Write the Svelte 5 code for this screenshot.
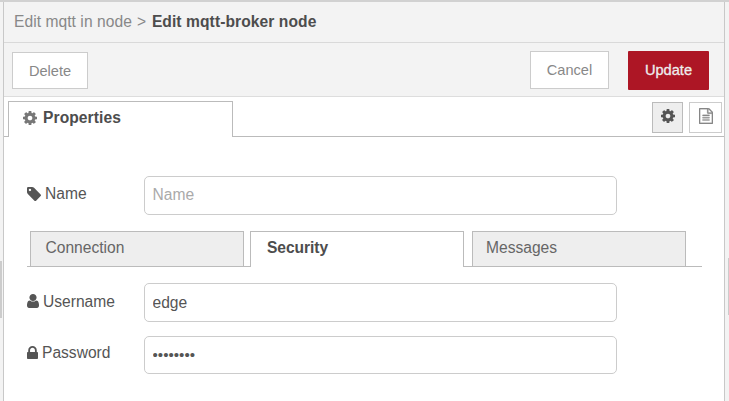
<script>
  const cog = 'M1152 896q0-106-75-181t-181-75-181 75-75 181 75 181 181 75 181-75 75-181zm512-109v222q0 12-8 23t-20 13l-185 28q-19 54-39 91 35 50 107 138 10 12 10 25t-9 23q-27 37-99 108t-94 71q-12 0-26-9l-138-108q-44 23-91 38-16 136-29 186-7 28-36 28h-222q-14 0-24.5-8.5t-11.5-21.5l-28-184q-49-16-90-37l-141 107q-10 9-25 9-14 0-25-11-126-114-165-168-7-10-7-23 0-12 8-23 15-21 51-66.5t54-70.5q-27-50-41-99l-183-27q-13-2-21-12.5t-8-23.5v-222q0-12 8-23t19-13l186-28q14-46 39-92-40-57-107-138-10-12-10-24 0-10 9-23 26-36 98.5-107.5t94.5-71.5q13 0 26 10l138 107q44-23 91-38 16-136 29-186 7-28 36-28h222q14 0 24.5 8.5t11.5 21.5l28 184q49 16 90 37l142-107q9-9 24-9 13 0 25 10 129 119 165 170 7 8 7 22 0 12-8 23-15 21-51 66.5t-54 70.5q26 50 41 98l183 28q13 2 21 12.5t8 23.5z';
  const tag = 'M576 448q0-53-37.5-90.5t-90.5-37.5-90.5 37.5-37.5 90.5 37.5 90.5 90.5 37.5 90.5-37.5 37.5-90.5zm1067 576q0 53-37 90l-491 492q-39 37-91 37-53 0-90-37l-715-716q-38-37-64.5-101t-26.5-117v-416q0-52 38-90t90-38h416q53 0 117 26.5t102 64.5l715 714q37 39 37 91z';
  const lock = 'M640 768h512v-192q0-106-75-181t-181-75-181 75-75 181v192zm832 96v576q0 40-28 68t-68 28h-960q-40 0-68-28t-28-68v-576q0-40 28-68t68-28h32v-192q0-184 132-316t316-132 316 132 132 316v192h32q40 0 68 28t28 68z';
  const user = 'M1536 1399q0 109-62.5 187t-150.5 78h-854q-88 0-150.5-78t-62.5-187q0-85 8.5-160.5t31.5-152 58.5-131 94-89 134.5-34.5q131 128 313 128t313-128q76 0 134.5 34.5t94 89 58.5 131 31.5 152 8.5 160.5zm-256-887q0 159-112.5 271.5t-271.5 112.5-271.5-112.5-112.5-271.5 112.5-271.5 271.5-112.5 271.5 112.5 112.5 271.5z';
  const doc = 'M1596 380q28 28 48 76t20 88v1152q0 40-28 68t-68 28h-1344q-40 0-68-28t-28-68v-1600q0-40 28-68t68-28h896q40 0 88 20t76 48zm-444-244v376h376q-10-29-22-41l-313-313q-12-12-41-22zm384 1528v-1024h-416q-40 0-68-28t-28-68v-416h-768v1536h1280zm-1024-864q0-14 9-23t23-9h704q14 0 23 9t9 23v64q0 14-9 23t-23 9h-704q-14 0-23-9t-9-23v-64zm736 224q14 0 23 9t9 23v64q0 14-9 23t-23 9h-704q-14 0-23-9t-9-23v-64q0-14 9-23t23-9h704zm0 256q14 0 23 9t9 23v64q0 14-9 23t-23 9h-704q-14 0-23-9t-9-23v-64q0-14 9-23t23-9h704z';
</script>

{#snippet icon(path, box, width, height)}
  <svg viewBox={box} {width} {height} preserveAspectRatio="none" aria-hidden="true"><path d={path} /></svg>
{/snippet}

<div class="page">
  <div class="gutter left"><i></i></div>
  <main class="tray">
    <header class="crumbs">
      <span>Edit mqtt in node</span><span class="sep">&gt;</span><b>Edit mqtt-broker node</b>
    </header>

    <div class="toolbar">
      <button class="delete">Delete</button>
      <button class="cancel">Cancel</button>
      <button class="update">Update</button>
    </div>

    <nav class="maintabs">
      <div class="props">{@render icon(cog, '128 128 1536 1536', 14, 14)}<b>Properties</b></div>
      <div class="fill"></div>
      <div class="tools">
        <button class="tool on" aria-label="Properties">{@render icon(cog, '128 128 1536 1536', 14, 14)}</button>
        <button class="tool docs" aria-label="Description">{@render icon(doc, '128 0 1536 1792', 14, 16)}</button>
      </div>
    </nav>

    <div class="form">
      <div class="row">
        <label for="name">{@render icon(tag, '128 128 1516 1516', 14, 14)}<span class="name-text">Name</span></label>
        <input id="name" placeholder="Name" />
      </div>

      <nav class="subtabs">
        <div class="tab">Connection</div>
        <div class="tab active"><b>Security</b></div>
        <div class="tab messages">Messages</div>
      </nav>

      <div class="row username">
        <label for="user">{@render icon(user, '256 128 1280 1536', 12, 14)}<span class="user-text">Username</span></label>
        <input id="user" value="edge" />
      </div>
      <div class="row password">
        <label for="pass">{@render icon(lock, '320 128 1152 1408', 11, 13)}<span class="pass-text">Password</span></label>
        <input id="pass" value="••••••••" />
      </div>
    </div>
  </main>
  <div class="gutter right"><i></i></div>
</div>

<style>
  .page {
    display: flex;
    width: 729px;
    height: 401px;
    box-sizing: border-box;
    border-top: 2px solid #d1d1d1;
    background: #f3f3f3;
    overflow: hidden;
    font: 15.6px/20px "Liberation Sans", Arial, sans-serif;
    color: #555;
  }
  .page * { box-sizing: border-box; }
  svg { display: block; flex: none; fill: currentColor; }
  .gutter { display: flex; flex: none; }
  .left { width: 3px; padding-top: 259px; }
  .right { width: 4px; padding-top: 256px; justify-content: flex-end; }
  .gutter i { width: 2px; height: 57px; background: #ccc; }
  .right i { width: 1px; }
  .tray {
    flex: none;
    width: 722px;
    border-left: 1px solid #c8c8c8;
    border-right: 1px solid #c8c8c8;
    background: #fff;
  }
  .crumbs {
    display: flex;
    height: 41px;
    padding: 10px 0 0 10px;
    border-bottom: 1px solid #d9d9d9;
    background: #f3f3f3;
    color: #888;
    white-space: nowrap;
  }
  .crumbs span:first-child { letter-spacing: .05px; }
  .sep { width: 15px; margin-left: 5px; }
  .crumbs b { color: #4d4d4d; letter-spacing: .08px; }
  .toolbar {
    display: flex;
    align-items: flex-start;
    height: 54px;
    padding: 9px 15px 0 8px;
    border-bottom: 1px solid #ddd;
    background: #f3f3f3;
  }
  button {
    display: flex;
    align-items: center;
    justify-content: center;
    margin: 0;
    padding: 0;
    border: 1px solid #ccc;
    background: #fff;
    color: #888;
    font: inherit;
    font-size: 14.6px;
  }
  .delete { width: 76px; height: 37px; }
  .cancel { width: 79px; height: 38px; margin: -1px 0 0 auto; }
  .update { width: 81px; height: 39px; margin: -1px 0 0 19px; padding-bottom: 2px; border: 0; border-radius: 1px; background: #ad1625; color: #eee; -webkit-text-stroke: .3px #eee; }
  .maintabs { display: flex; height: 40px; padding-left: 4px; }
  .maintabs::before { content: ""; width: 4px; margin-left: -4px; border-bottom: 1px solid #bbb; }
  .props {
    display: flex;
    width: 225px;
    margin-top: 4px;
    padding: 9px 0 0 14px;
    border: 1px solid #bbb;
    border-bottom: 0;
    color: #777;
  }
  .props b { margin: -3px 0 0 6px; color: #4d4d4d; letter-spacing: .08px; }
  .fill { flex: 1; border-bottom: 1px solid #bbb; }
  .tools { display: flex; gap: 6px; padding: 5px 2px 0 0; border-bottom: 1px solid #bbb; }
  .tool { width: 31px; height: 31px; }
  .on { border-color: #bbb; background: #eee; color: #555; padding-bottom: 3px; }
  .docs { width: 33px; padding-bottom: 3px; }
  .docs :global(path) { stroke: currentColor; stroke-width: 30px; }
  .form { padding: 39px 0 0 23px; }
  .row { display: flex; }
  .row label { display: flex; flex: none; width: 117px; padding-top: 11px; }
  .name-text { margin: -3px 0 0 4px; }
  input {
    width: 473px;
    height: 39px;
    margin: 0;
    padding: 0 7.5px;
    border: 1px solid #ccc;
    border-radius: 5px;
    outline: 0;
    background: #fff;
    color: #555;
    font: inherit;
  }
  #name { height: 39px; padding-bottom: 2px; }
  input::placeholder { color: #aaa; opacity: 1; }
  .subtabs {
    display: flex;
    width: 675px;
    height: 36px;
    margin-top: 16px;
  }
  .subtabs::before, .subtabs::after { content: ""; border-bottom: 1px solid #bbb; }
  .subtabs::before { width: 3px; }
  .subtabs::after { flex: 1; }
  .tab {
    width: 214px;
    padding: 6px 0 0 14.5px;
    border: 1px solid #bbb;
    background: #eee;
    color: #666;
  }
  .active {
    display: flex;
    width: 228px;
    padding: 0;
    border: 0;
    background: #fff;
    color: #4d4d4d;
  }
  .active::before { content: ""; width: 6px; border-bottom: 1px solid #bbb; }
  .active::after { content: ""; flex: 1; border-bottom: 1px solid #bbb; }
  .active b { width: 214px; padding: 6px 0 0 16px; border: 1px solid #bbb; border-bottom: 0; letter-spacing: -.05px; }
  .messages { padding-left: 13px; }
  .username { margin-top: 16px; }
  .username label { padding-top: 11px; }
  .user-text { margin: -2px 0 0 4px; }
  .password { margin-top: 14px; }
  .password label { padding-top: 10px; }
  .password input { height: 38px; padding-bottom: 1px; }
  #pass { font-size: 15.2px; }
  .pass-text { margin: -3px 0 0 4px; }
</style>
